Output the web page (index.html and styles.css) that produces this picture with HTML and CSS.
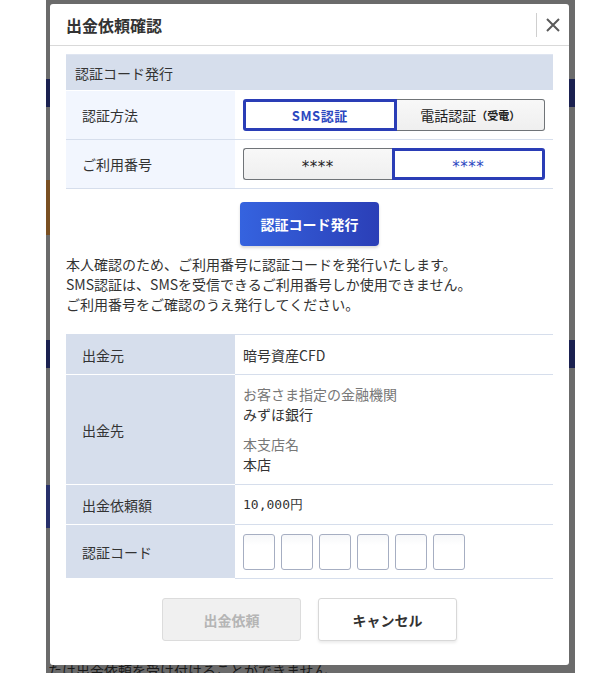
FILE: index.html
```html
<!DOCTYPE html>
<html lang="ja">
<head>
<meta charset="utf-8">
<title>出金依頼確認</title>
<link rel="stylesheet" href="styles.css">
</head>
<body>
<div class="page">
  <div class="bg-band bg-gray h79"></div>
  <div class="bg-band bg-navy h28"></div>
  <div class="bg-band bg-gray h73"></div>
  <div class="bg-band bg-orange half h55"></div>
  <div class="bg-band bg-gray h105"></div>
  <div class="bg-band bg-navy h28"></div>
  <div class="bg-band bg-gray h117"></div>
  <div class="bg-band bg-navy2 half h43"></div>
  <div class="bg-band bg-gray h132"></div>
  <p class="bg-text">たは出金依頼を受け付けることができません。</p>
</div>

<div class="modal">
  <div class="modal-header">
    <h1 class="modal-title">出金依頼確認</h1>
    <button class="close-btn" type="button" aria-label="閉じる">
      <svg width="14" height="14" viewBox="0 0 14 14"><path d="M1 1 L13 13 M13 1 L1 13" stroke="#5a5a5a" stroke-width="2" fill="none"/></svg>
    </button>
  </div>
  <div class="modal-body">
    <table class="auth-table">
      <tr><th colspan="2" class="band">認証コード発行</th></tr>
      <tr>
        <th class="label">認証方法</th>
        <td class="value">
          <div class="toggle">
            <span class="opt active"><b>SMS認証</b></span>
            <span class="opt">電話認証<small>（受電）</small></span>
          </div>
        </td>
      </tr>
      <tr>
        <th class="label">ご利用番号</th>
        <td class="value">
          <div class="toggle">
            <span class="opt stars">****</span>
            <span class="opt active stars">****</span>
          </div>
        </td>
      </tr>
    </table>

    <div class="issue-wrap"><button class="issue-btn" type="button">認証コード発行</button></div>

    <p class="note">本人確認のため、ご利用番号に認証コードを発行いたします。<br>SMS認証は、SMSを受信できるご利用番号しか使用できません。<br>ご利用番号をご確認のうえ発行してください。</p>

    <table class="info-table">
      <tr class="r-short"><th>出金元</th><td>暗号資産CFD</td></tr>
      <tr class="r-dest"><th>出金先</th><td>
        <div class="sub">お客さま指定の金融機関</div>
        <div>みずほ銀行</div>
        <div class="sub gap">本支店名</div>
        <div>本店</div>
      </td></tr>
      <tr class="r-short"><th>出金依頼額</th><td class="mono">10,000円</td></tr>
      <tr class="r-code"><th>認証コード</th><td>
        <div class="codes">
          <input class="code" type="text" maxlength="1">
          <input class="code" type="text" maxlength="1">
          <input class="code" type="text" maxlength="1">
          <input class="code" type="text" maxlength="1">
          <input class="code" type="text" maxlength="1">
          <input class="code" type="text" maxlength="1">
        </div>
      </td></tr>
    </table>

    <div class="footer">
      <button class="fbtn disabled" type="button" disabled>出金依頼</button>
      <button class="fbtn cancel" type="button">キャンセル</button>
    </div>
  </div>
</div>
</body>
</html>
```

FILE: styles.css
```css
* { box-sizing: border-box; }
html, body { margin: 0; padding: 0; background: #fff; }
body {
  width: 613px;
  height: 673px;
  overflow: hidden;
  position: relative;
  font-family: "Noto Sans CJK JP", "Noto Sans", sans-serif;
  color: #333;
}

/* dimmed page behind the dialog */
.page {
  margin-left: 46px;
  width: 529px;
  height: 673px;
  background: #6b6b6b;
  overflow: hidden;
}
.bg-band { width: 100%; }
.bg-band.half { width: 50%; }
.bg-gray { background: #6b6b6b; }
.bg-navy { background: #1b2150; }
.bg-navy2 { background: #27306a; }
.bg-orange { background: #7a5022; }
.h28 { height: 28px; }
.h43 { height: 43px; }
.h55 { height: 55px; }
.h73 { height: 73px; }
.h79 { height: 79px; }
.h105 { height: 105px; }
.h117 { height: 117px; }
.h132 { height: 132px; }
.bg-text {
  margin: 0;
  padding-left: 2px;
  font-size: 14px;
  line-height: 20px;
  color: #1a1a1a;
}

/* dialog */
.modal {
  position: absolute;
  top: 4px;
  left: 50px;
  width: 519px;
  background: #fff;
  border-radius: 3px;
}
.modal-header {
  height: 42px;
  border-bottom: 1px solid #d9d9d9;
  display: flex;
  align-items: center;
  justify-content: space-between;
  padding-left: 16px;
}
.modal-title {
  margin: 0;
  font-size: 16px;
  font-weight: bold;
  color: #333;
}
.close-btn {
  width: 33px;
  height: 24px;
  border: 0;
  border-left: 1px solid #cfcfcf;
  background: none;
  padding: 0;
  display: flex;
  align-items: center;
  justify-content: center;
}

.modal-body { padding: 8px 16px 24px; }

table { border-collapse: collapse; width: 100%; }
th, td { padding: 0; text-align: left; font-weight: normal; font-size: 14px; color: #333; }

.auth-table { border-top: 1px solid #dfe5f1; }
.auth-table .band {
  height: 36px;
  background: #d6deec;
  padding-left: 9px;
  border-bottom: 1px solid #fff;
}
.auth-table .label {
  width: 169px;
  height: 49px;
  background: #f2f6fe;
  padding-left: 16px;
  border-bottom: 1px solid #d6deec;
}
.auth-table .value {
  padding: 0 8px;
  border-bottom: 1px solid #d6deec;
}
.toggle {
  display: flex;
  width: 302px;
  height: 32px;
}
.opt {
  flex: 1;
  display: flex;
  align-items: center;
  justify-content: center;
  border: 1px solid #707478;
  background: linear-gradient(#f8f8f8, #efefef);
  color: #222;
  font-size: 14px;
}
.opt:first-child { border-radius: 3px 0 0 3px; border-right: 0; }
.opt:last-child { border-radius: 0 3px 3px 0; border-left: 0; }
.opt small { font-size: 11px; font-weight: bold; }
.opt.active {
  border: 3px solid #2a3db6;
  background: #fff;
  color: #2b46bf;
}
.opt b { font-weight: bold; font-size: 13px; letter-spacing: 0.5px; }
.stars {
  font-family: "DejaVu Sans", sans-serif;
  font-size: 15px;
  letter-spacing: 0.5px;
  padding-top: 6px;
}

.issue-wrap { display: flex; justify-content: center; margin-top: 13px; }
.issue-btn {
  width: 139px;
  height: 44px;
  border: 0;
  border-radius: 4px;
  background: linear-gradient(90deg, #3563df, #2b3fb7);
  color: #fff;
  font-family: inherit;
  font-size: 14px;
  font-weight: bold;
  box-shadow: 0 2px 3px rgba(0,0,0,0.15);
}

.note {
  margin: 8px 0 0;
  font-size: 14px;
  line-height: 20px;
  color: #333;
}

.info-table { margin-top: 20px; border-top: 1px solid #d6deec; }
.info-table th {
  width: 169px;
  background: #d6deec;
  padding-left: 16px;
  border-bottom: 1px solid #fff;
}
.info-table td {
  padding-left: 8px;
  border-bottom: 1px solid #d6deec;
  line-height: 20px;
}
.r-short th, .r-short td { height: 40px; }
.r-dest td { height: 110px; padding-top: 9px; padding-bottom: 10px; }
.r-code th, .r-code td { height: 54px; }
.sub { color: #777; }
.gap { margin-top: 10px; }
.mono { font-family: "DejaVu Sans Mono", monospace; font-size: 13px; }
.codes { display: flex; gap: 6px; }
.code {
  width: 32px;
  height: 36px;
  border: 1px solid #a6aec2;
  border-radius: 3px;
  background: linear-gradient(#f6f7f9, #fff 30%);
  padding: 0;
}

.footer {
  display: flex;
  justify-content: center;
  gap: 17px;
  margin-top: 19px;
}
.fbtn {
  width: 139px;
  height: 43px;
  border-radius: 3px;
  font-family: inherit;
  font-size: 14px;
  font-weight: bold;
}
.fbtn.disabled {
  background: #f0f0f0;
  border: 1px solid #dcdcdc;
  color: #b5b5b5;
}
.fbtn.cancel {
  background: #fff;
  border: 1px solid #d8d8d8;
  color: #333;
  box-shadow: 0 2px 3px rgba(0,0,0,0.08);
}
```
